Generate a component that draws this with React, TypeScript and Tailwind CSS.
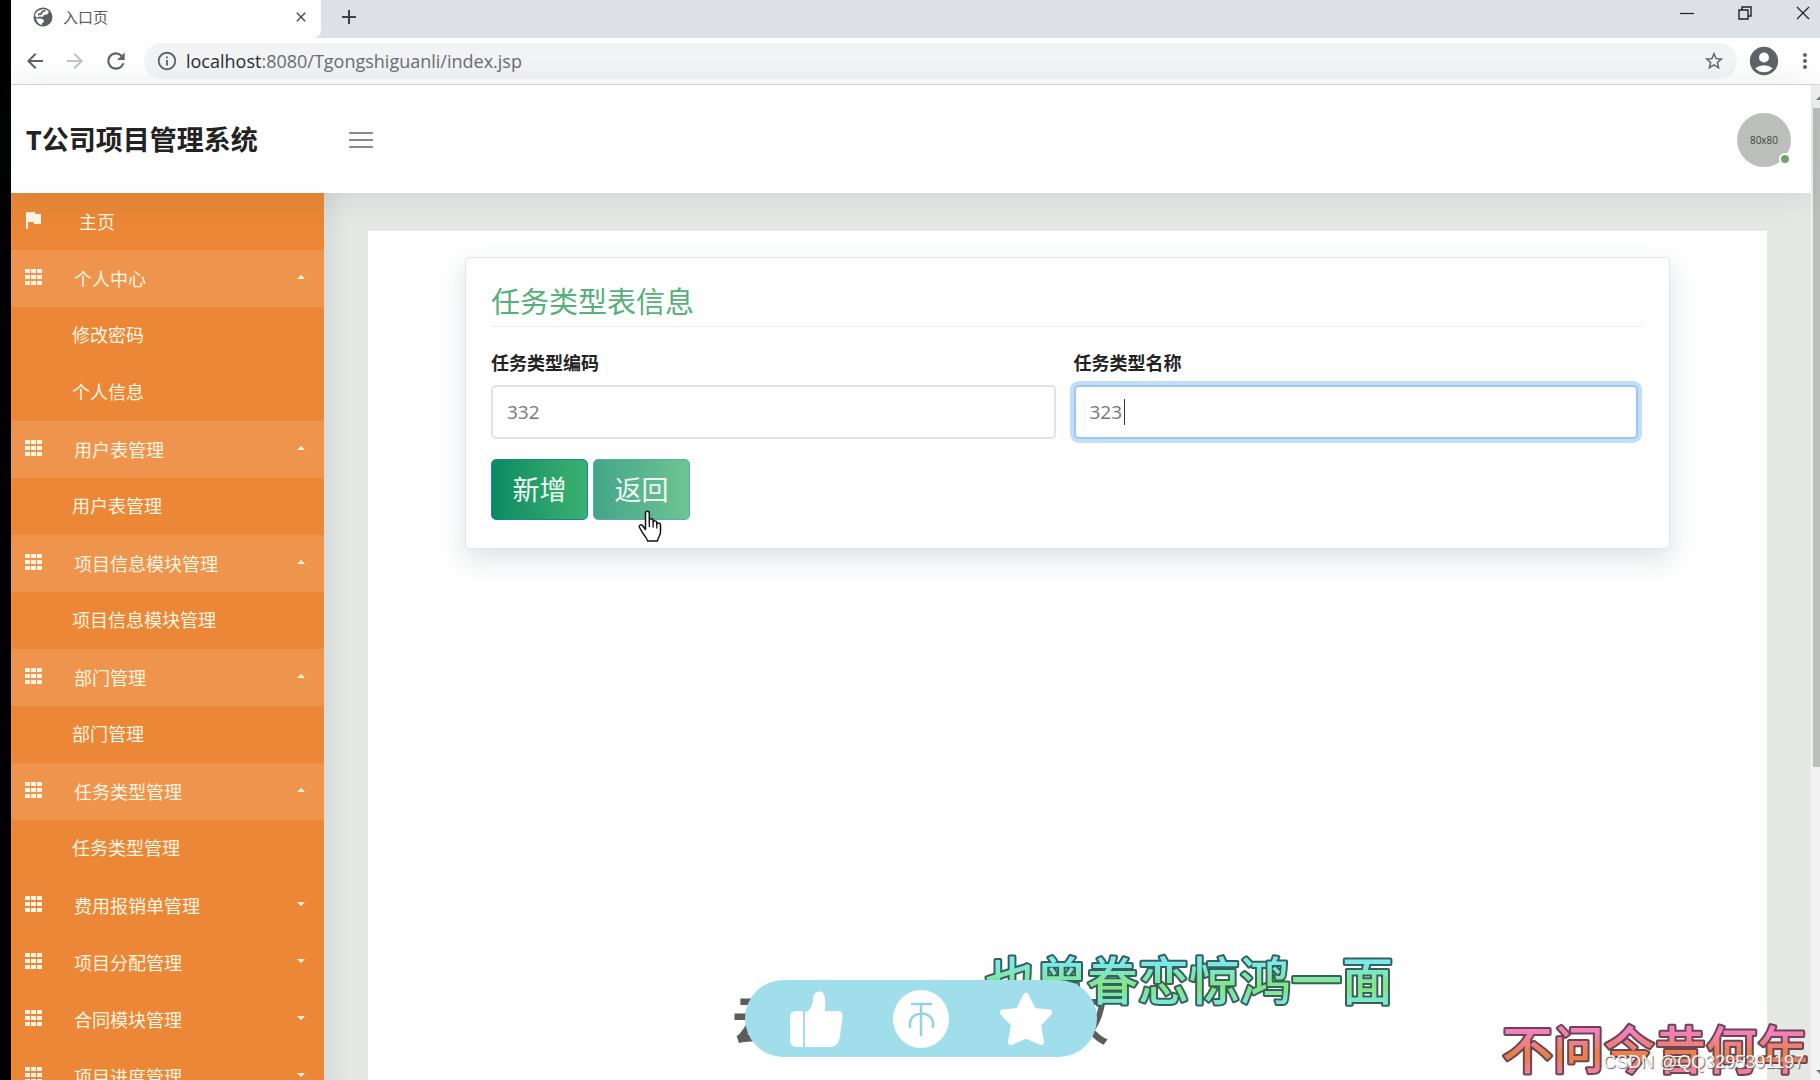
import { useState } from 'react';
import { MdFlag, MdAccountCircle, MdArrowBack, MdArrowForward, MdRefresh, MdStarBorder, MdMoreVert, MdInfoOutline, MdClose, MdAdd } from 'react-icons/md';

type MenuGroup = {
  label: string;
  open: boolean;
  children: string[];
};

const MENU: MenuGroup[] = [
  { label: '个人中心', open: true, children: ['修改密码', '个人信息'] },
  { label: '用户表管理', open: true, children: ['用户表管理'] },
  { label: '项目信息模块管理', open: true, children: ['项目信息模块管理'] },
  { label: '部门管理', open: true, children: ['部门管理'] },
  { label: '任务类型管理', open: true, children: ['任务类型管理'] },
  { label: '费用报销单管理', open: false, children: [] },
  { label: '项目分配管理', open: false, children: [] },
  { label: '合同模块管理', open: false, children: [] },
  { label: '项目进度管理', open: false, children: [] },
];

function GlobeIcon() {
  return (
    <svg viewBox="0 0 20 20" className="size-5" aria-hidden="true">
      <circle cx="10" cy="10" r="9.500" fill="#5a5d61" />
      <path d="M9 2.500c3-.8 5.500.5 7 2.500l-2 2.500-3 .5-1.500 2-3-.5L4 10.500 2 9c.5-3.500 3-6 7-6.500z" fill="#fdfefd" />
      <path d="M12.500 3.500 9.500 4.500 8 7l-3 .5" fill="none" stroke="#5a5d61" strokeWidth="1.800" />
      <path d="M3 11.500h5l3 1.500-.5 2.500-1.500.5V18c-3-.5-5.200-3-6-6.500z" fill="#fdfefd" />
    </svg>
  );
}

function GridIcon() {
  return (
    <svg viewBox="0 0 17 16" className="h-4 w-[17px] shrink-0" fill="currentColor" aria-hidden="true">
      {[0, 6, 12].map((y) =>
        [0, 6, 12].map((x) => <rect key={`${x}-${y}`} x={x} y={y} width="5" height="4" />)
      )}
    </svg>
  );
}

function Caret({ up }: { up: boolean }) {
  return (
    <svg viewBox="0 0 10 5" className="h-1 w-2.5" fill="currentColor" aria-hidden="true">
      <path d={up ? 'M0 5 5 0l5 5z' : 'M0 0h10L5 5z'} />
    </svg>
  );
}

function TabStrip() {
  return (
    <div className="flex h-[38px] shrink-0 bg-[#dde0e4]">
      <div className="flex w-[310px] items-center rounded-br-lg bg-[#fdfefd] pb-1 pl-[22px] pr-3">
        <GlobeIcon />
        <span className="ml-2.5 flex-1 text-[15px] leading-5 text-[#5c5c5c]">入口页</span>
        <button aria-label="关闭标签页" className="text-[#45484c]">
          <MdClose className="size-4" />
        </button>
      </div>
      <button aria-label="新标签页" className="ml-4 pb-1 text-[#3c4043]">
        <MdAdd className="size-6" />
      </button>
      <div className="ml-auto flex items-center gap-[44px] pb-3 pr-2.5 text-[#222]">
        <button aria-label="最小化">
          <svg viewBox="0 0 14 14" className="size-3.5" stroke="currentColor" strokeWidth="1.2" fill="none">
            <path d="M0 7.5h14" />
          </svg>
        </button>
        <button aria-label="还原">
          <svg viewBox="0 0 14 14" className="size-3.5" stroke="currentColor" strokeWidth="1.4" fill="none">
            <path d="M1 4h9v9H1zM4 4V1h9v9h-3" />
          </svg>
        </button>
        <button aria-label="关闭">
          <svg viewBox="0 0 14 14" className="size-3.5" stroke="currentColor" strokeWidth="1.2" fill="none">
            <path d="M1 1l12 12M13 1 1 13" />
          </svg>
        </button>
      </div>
    </div>
  );
}

function Toolbar() {
  return (
    <div className="flex h-[47px] shrink-0 items-center border-b border-[#d8dadb] bg-[#fdfefd] pl-3 pr-[3px] text-[#5f6368]">
      <button aria-label="后退"><MdArrowBack className="size-6" /></button>
      <button aria-label="前进" className="ml-4 text-[#bfc1c3]"><MdArrowForward className="size-6" /></button>
      <button aria-label="刷新" className="ml-4"><MdRefresh className="size-[26px]" /></button>
      <div className="ml-[15px] flex h-9 flex-1 items-center rounded-full bg-[#f1f3f4] pl-3 pr-3">
        <MdInfoOutline className="size-[22px]" />
        <span className="ml-2 flex-1 text-lg leading-6 text-[#6a6d70]">
          <span className="text-[#2b2d30]">localhost</span>:8080/Tgongshiguanli/index.jsp
        </span>
        <button aria-label="收藏"><MdStarBorder className="size-[22px]" /></button>
      </div>
      <button aria-label="用户" className="ml-2.5"><MdAccountCircle className="size-[34px]" /></button>
      <button aria-label="更多" className="ml-3"><MdMoreVert className="size-6" /></button>
    </div>
  );
}

function Header() {
  return (
    <header className="relative z-10 flex h-[108px] shrink-0 items-center bg-[#fdfefd] pl-[15px] pr-5 pt-0.5 shadow-[0_4px_30px_rgba(60,80,70,0.12)]">
      <h1 className="w-[323px] text-[27px] font-bold leading-8 text-[#222]">T公司项目管理系统</h1>
      <button aria-label="菜单" className="flex flex-col gap-[5px]">
        <span className="h-0.5 w-6 bg-[#8b8b8b]" />
        <span className="h-0.5 w-6 bg-[#8b8b8b]" />
        <span className="h-0.5 w-6 bg-[#8b8b8b]" />
      </button>
      <div className="relative ml-auto flex size-[54px] items-center justify-center rounded-full bg-[#bcbebc] text-[10px] text-[#404240]">
        80x80
        <span className="absolute bottom-0.5 right-0 size-3 rounded-full border-2 border-white bg-[#6fa367]" />
      </div>
    </header>
  );
}

function Sidebar() {
  return (
    <nav className="w-[313px] shrink-0 overflow-hidden bg-[#eb8736] text-lg leading-6 text-[#fff6e4]">
      <a href="#" className="flex h-[57px] items-center pl-2.5">
        <MdFlag className="mb-1 size-6" />
        <span className="ml-[34px]">主页</span>
      </a>
      {MENU.map((group) => (
        <div key={group.label}>
          <button
            className={`flex h-[57px] w-full items-center pl-3.5 pr-[18px] text-left ${group.open ? 'bg-[#ef944d]' : ''}`}
          >
            <span className="mb-1"><GridIcon /></span>
            <span className="ml-8 flex-1">{group.label}</span>
            <span className="mb-1"><Caret up={group.open} /></span>
          </button>
          {group.children.map((child) => (
            <a key={child} href="#" className="flex h-[57px] items-center pb-0.5 pl-[61px]">
              {child}
            </a>
          ))}
        </div>
      ))}
    </nav>
  );
}

function HandCursor() {
  return (
    <svg viewBox="0 0 24 32" className="pointer-events-none absolute left-[45px] top-[51px] h-8 w-6" aria-hidden="true">
      <path
        d="M7.5 19.5V3.2C7.5 .6 11.3 .6 11.3 3.2V12v-1.500c0-2.300 3.800-2.300 3.800 0V12.500c0-2.200 3.700-2.200 3.700.2V14.500c0-2 3.700-2 3.700.3V22c0 4-2.500 5-3 9H9.500C9 27.500 5.500 25 3.800 21.500L1.500 17.500c-.8-2 1.500-3.500 3-2z"
        fill="#fff"
        stroke="#111"
        strokeWidth="1.5"
        strokeLinejoin="round"
      />
      <path d="M11.300 12v5M15.100 12.500v5M18.800 14.500v4" stroke="#111" strokeWidth="1.300" />
    </svg>
  );
}

function TaskTypeForm() {
  const [code, setCode] = useState('332');
  const [name, setName] = useState('323');

  return (
    <section className="rounded border border-[#e0e5ea] bg-[#fdfefd] px-[25px] pb-7 pt-6 shadow-[0_10px_24px_rgba(60,80,120,0.16)]">
      <h2 className="mr-0.5 border-b border-[#e9ebea] pb-1 text-[29px] leading-10 text-[#55b07a]">任务类型表信息</h2>
      <form onSubmit={(e) => e.preventDefault()}>
        <div className="mt-6 grid grid-cols-2 gap-[18px] pr-1.5">
          <div>
            <label htmlFor="code" className="block text-lg font-bold leading-6 text-[#222]">任务类型编码</label>
            <input
              id="code"
              value={code}
              onChange={(e) => setCode(e.target.value)}
              className="mt-2.5 h-[54px] w-full rounded-[5px] border-2 border-[#dfe1e2] bg-[#fdfefd] px-3.5 text-[19px] text-[#74787b] outline-none"
            />
          </div>
          <div>
            <label htmlFor="name" className="block text-lg font-bold leading-6 text-[#222]">任务类型名称</label>
            <div className="relative mt-2.5">
              <input
                id="name"
                value={name}
                onChange={(e) => setName(e.target.value)}
                className="block h-[54px] w-full rounded-[5px] border-2 border-[#9cc9ef] bg-[#fdfefd] px-3.5 text-[19px] text-[#74787b] outline-none ring-4 ring-[#c3ddf9]"
              />
              <span className="absolute left-[50px] top-3.5 h-[26px] w-px bg-[#333]" />
            </div>
          </div>
        </div>
        <div className="mt-5 flex gap-[5px] text-[27px] leading-9 text-[#effbf3]">
          <button className="h-[61px] w-[97px] rounded-[5px] border border-[#15879b] bg-linear-to-r from-[#078a62] to-[#3bb271]">
            新增
          </button>
          <div className="relative">
            <button type="button" className="h-[61px] w-[97px] rounded-[5px] border border-[#55acbb] bg-linear-to-r from-[#43a588] to-[#6dc593]">
              返回
            </button>
            <HandCursor />
          </div>
        </div>
      </form>
    </section>
  );
}

// Scroll bar of the inner page
function ScrollTrack() {
  return (
    <div className="flex w-[9px] shrink-0 flex-col items-end bg-[#f1f2f1] pl-0.5 pt-[11px] text-[#777]">
      <svg viewBox="0 0 4 4" className="mb-2 size-1" fill="currentColor"><path d="M0 4 4 0v4z" /></svg>
      <div className="h-[67%] w-full bg-[#bdbfbd]" />
      <svg viewBox="0 0 4 4" className="mb-1.5 mt-auto size-1" fill="currentColor"><path d="M0 0h4v4z" /></svg>
    </div>
  );
}

function Lyric({ id, text, edge, middle, outline, className }: {
  id: string;
  text: string;
  edge: string;
  middle: string;
  outline: string;
  className: string;
}) {
  return (
    <svg className={className} aria-label={text}>
      <defs>
        <linearGradient id={id} x1="0" y1="0" x2="0" y2="1">
          <stop offset="0.25" stopColor={edge} />
          <stop offset="0.6" stopColor={middle} />
          <stop offset="0.9" stopColor={edge} />
        </linearGradient>
      </defs>
      <text
        x="2"
        y="47"
        fill={`url(#${id})`}
        stroke={outline}
        strokeWidth="4"
        strokeLinejoin="round"
        paintOrder="stroke"
        className="text-[51px] font-medium"
      >
        {text}
      </text>
    </svg>
  );
}

function LikeBar() {
  return (
    <div className="absolute bottom-[23px] left-[745px] flex h-[77px] w-[352px] items-center justify-center gap-[49px] rounded-full bg-[#a0deec]">
      <button aria-label="点赞">
        <svg viewBox="0 0 56 58" className="h-[58px] w-14" fill="#fff">
          <path d="M15 21H8q-6 0-6 6v23q0 7 7 7h6z" />
          <path d="M17 57V22c5-1 8-6 8-13 0-5 3-7.500 6.500-7.500 5 0 6.500 5 5.500 19.500h13q5 0 4.500 6L52 46q-1.500 11-9 11z" />
        </svg>
      </button>
      <button aria-label="投币">
        <svg viewBox="0 0 56 58" className="h-[58px] w-14">
          <ellipse cx="28" cy="29" rx="28" ry="29" fill="#fff" />
          <path d="M19 14h19M28 14v31M17 37v-3c0-14 23-14 23 0v3" fill="none" stroke="#8fd3e6" strokeWidth="2.500" strokeLinecap="round" />
        </svg>
      </button>
      <button aria-label="收藏视频">
        <svg viewBox="0 0 56 58" className="h-[58px] w-14">
          <path
            d="M28 6l7.500 15 15.500 1.500L40 34.500 43 52l-15-6.500L13 52l3-17.500L5 22.500 20.500 21z"
            fill="#fff"
            stroke="#fff"
            strokeWidth="6"
            strokeLinejoin="round"
          />
        </svg>
      </button>
    </div>
  );
}

export default function App() {
  return (
    <div className="relative flex h-screen flex-col overflow-hidden bg-black pl-[11px] font-['Open_Sans','Noto_Sans_CJK_SC',sans-serif]">
      <TabStrip />
      <Toolbar />
      <div className="flex min-h-0 flex-1">
        <div className="flex min-w-0 flex-1 flex-col">
          <Header />
          <div className="flex min-h-0 flex-1 bg-[#e6e8e6]">
            <Sidebar />
            <main className="flex min-w-0 flex-1 pl-11 pr-11 pt-[38px] shadow-[inset_24px_0_16px_-12px_rgba(90,110,110,0.1)]">
              <div className="flex-1 bg-[#fdfefd] px-[97px] pt-[26px]">
                <TaskTypeForm />
              </div>
            </main>
          </div>
        </div>
        <ScrollTrack />
      </div>

      <div className="absolute bottom-8 left-[732px] flex w-[377px] justify-between text-[52px] font-bold leading-[56px] text-[#5c5c5c]">
        <span>云</span>
        <span>汉</span>
      </div>
      <Lyric
        id="lyric-green"
        text="也曾眷恋惊鸿一面"
        edge="#7be9ef"
        middle="#84e57c"
        outline="#35605c"
        className="absolute bottom-[67px] left-[983px] h-[60px] w-[420px]"
      />
      <LikeBar />
      <Lyric
        id="lyric-pink"
        text="不问今昔何年"
        edge="#f47fc2"
        middle="#e9803f"
        outline="#6b4652"
        className="absolute -bottom-0.5 right-2 h-[60px] w-[312px]"
      />
      <p className="absolute bottom-1.5 right-4 font-['Liberation_Sans',sans-serif] text-lg leading-6 text-[#f4f4f4] [text-shadow:1px_1px_1px_#666]">
        CSDN @QQ3295391197
      </p>
    </div>
  );
}
